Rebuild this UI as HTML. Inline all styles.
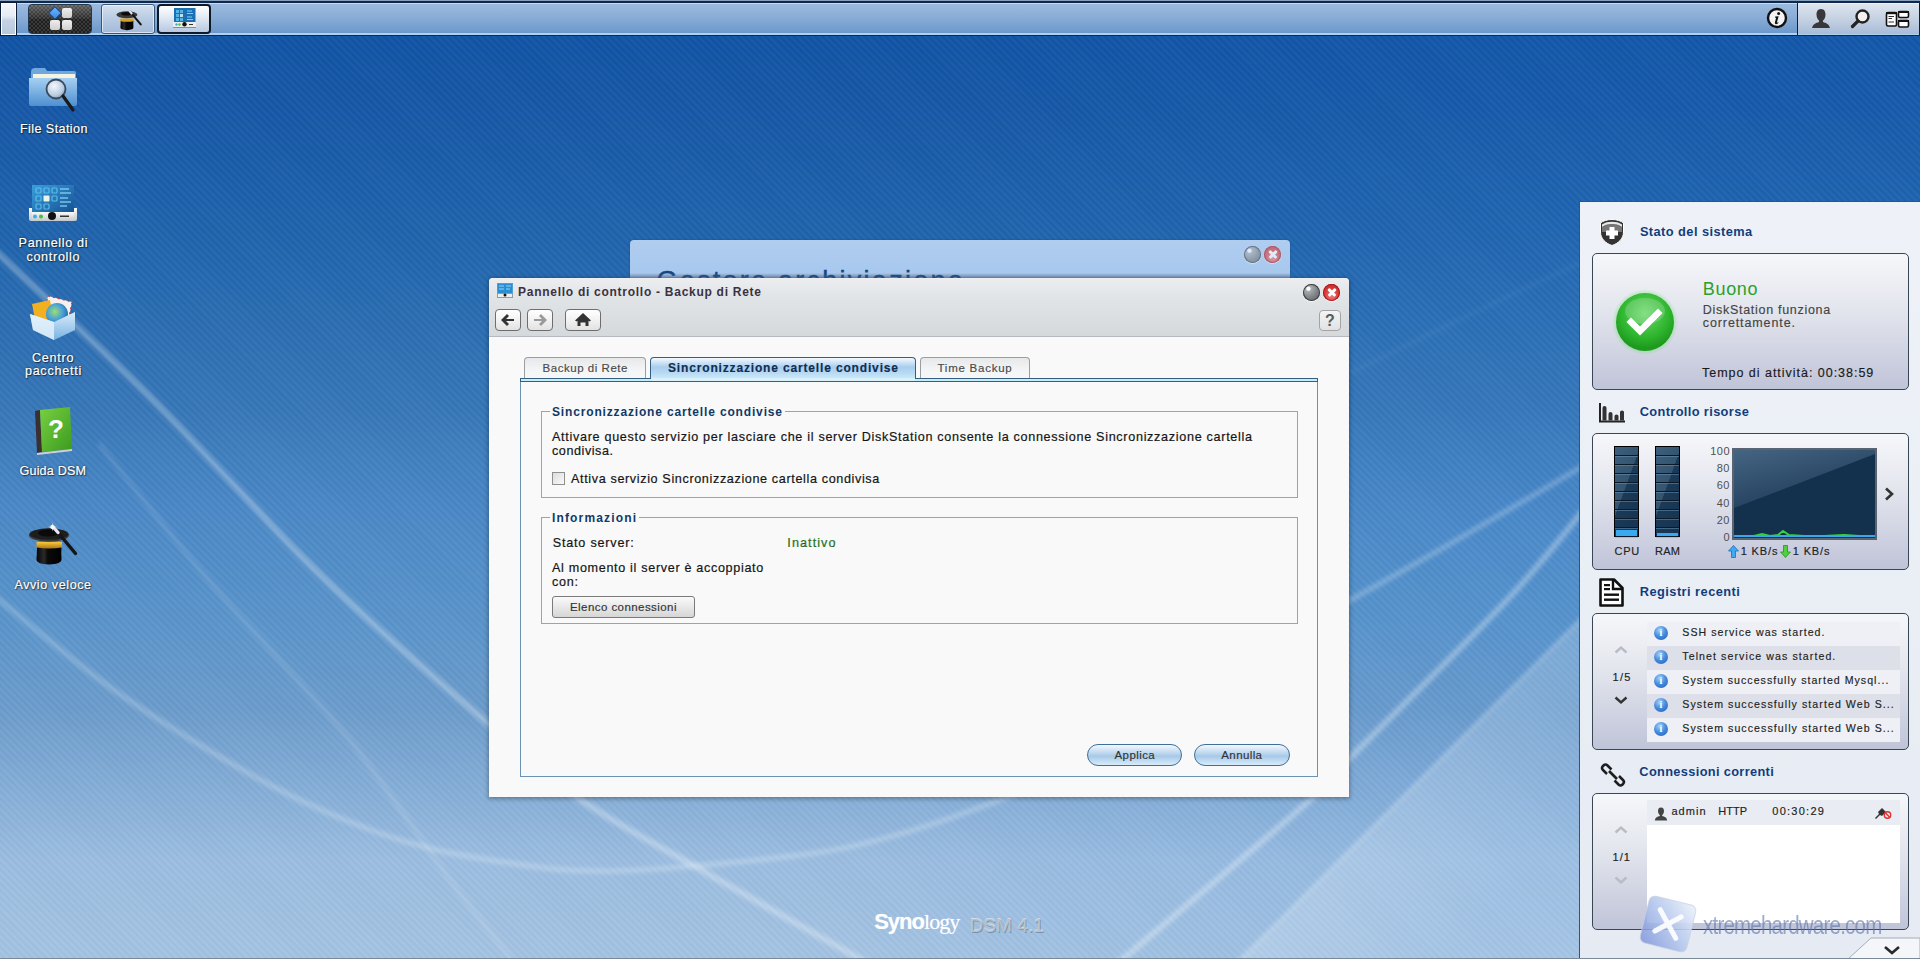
<!DOCTYPE html>
<html><head><meta charset="utf-8">
<style>
*{box-sizing:border-box;margin:0;padding:0}
html,body{width:1920px;height:959px;overflow:hidden}
body{position:relative;font-family:"Liberation Sans",sans-serif;font-size:13px;color:#222;
background:linear-gradient(180deg,#0f52a4 0px,#1658a7 110px,#2165ad 245px,#3777b8 410px,#4a88c6 510px,#5b95cb 625px,#6c9ccc 710px,#9bbde0 860px,#a4c3e2 959px);}
.a{position:absolute}
#stripes{position:absolute;left:0;top:0;width:1920px;height:959px;
background:repeating-linear-gradient(45deg,rgba(255,255,255,0.03) 0 2.5px,rgba(0,0,0,0.02) 2.5px 5px),linear-gradient(90deg,rgba(30,110,220,0) 0,rgba(30,110,220,0) 900px,rgba(40,130,230,.07) 1500px,rgba(40,130,230,.07) 1920px)}
/* top bar */
#bar{position:absolute;left:0;top:0;width:1920px;height:36px;
background:linear-gradient(180deg,#8aa0bc 0,#8aa0bc 1px,#0c2a50 1px,#0c2a50 3px,#c4dcf8 3px,#c4dcf8 4px,#9cbade 4px,#88acd6 18px,#6c98cc 33px,#b0d0f0 33px,#b0d0f0 35px,#0b2a5a 35px,#0b2a5a 36px)}
.dl{position:absolute;white-space:nowrap;color:#fff;font-size:12.6px;-webkit-text-stroke:.2px #fff;line-height:14px;text-shadow:0 0 2px rgba(0,0,0,.7),1px 1px 1px rgba(0,0,0,.5)}
.btng{width:17px;height:17px;border-radius:50%;background:radial-gradient(circle at 32% 28%,#ffffff 0,#ffffff 9%,#a8acb0 16%,#7c8084 55%,#5a5e62 100%);box-shadow:inset 0 0 0 1px #3c4044,0 1px 1px rgba(255,255,255,.8)}
.btnr{width:17px;height:17px;border-radius:50%;background:radial-gradient(circle at 50% 70%,#f07a7a 0,#d83a3a 50%,#c42626 100%);box-shadow:inset 0 0 0 1px #a81c1c,0 1px 1px rgba(255,255,255,.8)}
.btnr span{display:none}
.btnr:before,.btnr:after{content:"";position:absolute;left:3.5px;top:7.2px;width:10px;height:2.6px;background:#fff;border-radius:1px;transform:rotate(45deg)}
.btnr:after{transform:rotate(-45deg)}
.fade{opacity:.62}
.nbtn{border:1px solid #6e6e6e;border-radius:4px;background:linear-gradient(180deg,#ffffff 0,#f2f2f2 50%,#e2e2e2 100%);overflow:hidden}
.nbtn svg{position:absolute;left:0;top:0}
.tab{border:1px solid #9a9ea2;border-bottom:none;border-radius:4px 4px 0 0;background:linear-gradient(180deg,#e6e8ea 0,#f4f5f6 60%,#f6f7f8 100%)}
.tab.act{border-color:#335f80;background:linear-gradient(180deg,#f4faff 0,#a8cdee 40%,#bcdcf4 70%,#d8f2fc 100%)}
.tt{position:absolute;top:3px;font-size:11.5px;line-height:14px;color:#4a4a4a;white-space:nowrap;-webkit-text-stroke:.15px currentColor}
.fs{border:1px solid #86aac6}
.lg{font-weight:bold;font-size:12px;color:#0f3a68;background:#f9f9f9;white-space:nowrap;line-height:14px;padding:0 2px}
.tx{font-size:12.6px;color:#151515;line-height:14px;white-space:nowrap;-webkit-text-stroke:.2px #151515}
.bt{font-size:11.5px;color:#333;line-height:14px;white-space:nowrap;-webkit-text-stroke:.15px currentColor}
.gbtn{border:1px solid #7a7a7a;border-radius:3px;background:linear-gradient(180deg,#fafafa 0,#e8e8e8 50%,#d6d6d6 100%);}
.pbtn{border:1px solid #3f6f9a;border-radius:11px;background:linear-gradient(180deg,#f2f8fc 0,#b8d4ee 45%,#a8c8e8 55%,#d8ecfa 100%);}
.wh{font-weight:bold;font-size:12.8px;line-height:16px;color:#113d7c;white-space:nowrap}
.wt{font-size:12.5px;line-height:14px;color:#1a1a1a;white-space:nowrap;-webkit-text-stroke:.15px currentColor}
.wbox{border:1px solid #3a4654;border-radius:5px;background:linear-gradient(180deg,#f6f7fa 0,#e4e6ee 40%,#c0c4d8 100%)}
.ylab{left:120px;width:30px;text-align:right;font-size:11px;line-height:12px;color:#505050;letter-spacing:.5px}
.row{left:67px;width:253px;height:24px}
.ii{left:74px;width:14px;height:14px;border-radius:50%;background:radial-gradient(circle at 40% 30%,#a8d0f8 0,#4a8ee0 45%,#1a5ab8 100%);color:#fff;font:bold 10px/14px 'Liberation Serif',serif;text-align:center}
.bar{background:#0a141e;border:1px solid #000}
</style></head><body>
<div id="stripes"></div>
<!-- swooshes -->
<svg class="a" style="left:0;top:0" width="1920" height="959" viewBox="0 0 1920 959">
 <defs><filter id="bl1" x="-5%" y="-5%" width="110%" height="110%"><feGaussianBlur stdDeviation="2.2"/></filter>
 <filter id="bl2" x="-5%" y="-5%" width="110%" height="110%"><feGaussianBlur stdDeviation="6"/></filter></defs>
 <g fill="none" stroke="#ffffff" stroke-linecap="round" filter="url(#bl1)">
  <path d="M-10.0 246.0 C4.2 259.2 47.3 298.8 75.0 325.0 C102.7 351.2 129.5 376.3 156.0 403.0 C182.5 429.7 210.0 459.7 234.0 485.0 C258.0 510.3 275.7 530.8 300.0 555.0 C324.3 579.2 348.3 601.7 380.0 630.0 C411.7 658.3 456.5 696.7 490.0 725.0 C523.5 753.3 545.5 775.7 581.0 800.0 C616.5 824.3 659.2 846.0 703.0 871.0 C746.8 896.0 816.2 934.3 844.0 950.0 C871.8 965.7 865.7 962.5 870.0 965.0" stroke-width="6" stroke-opacity=".33"/>
  <path d="M-10.0 592.0 C8.3 606.7 65.0 654.5 100.0 680.0 C135.0 705.5 166.7 725.0 200.0 745.0 C233.3 765.0 266.7 784.2 300.0 800.0 C333.3 815.8 368.3 830.0 400.0 840.0 C431.7 850.0 455.2 854.8 490.0 860.0 C524.8 865.2 557.3 871.8 609.0 871.0 C660.7 870.2 751.5 861.2 800.0 855.0 C848.5 848.8 867.2 843.0 900.0 834.0 C932.8 825.0 963.7 813.3 997.0 801.0 C1030.3 788.7 1082.8 766.8 1100.0 760.0" stroke-width="5" stroke-opacity=".25"/>
  <path d="M100.0 445.0 C116.7 465.8 170.8 535.0 200.0 570.0 C229.2 605.0 250.0 626.7 275.0 655.0 C300.0 683.3 326.7 710.8 350.0 740.0 C373.3 769.2 398.3 806.7 415.0 830.0 C431.7 853.3 433.2 857.5 450.0 880.0 C466.8 902.5 505.0 950.8 516.0 965.0" stroke-width="4" stroke-opacity=".15"/>
  <path d="M1590.0 258.0 C1570.5 267.2 1513.0 293.8 1473.0 313.0 C1433.0 332.2 1370.5 363.0 1350.0 373.0" stroke-width="3" stroke-opacity=".06"/>
  <path d="M1590.0 462.0 C1566.3 475.8 1489.7 521.0 1448.0 545.0 C1406.3 569.0 1358.0 595.8 1340.0 606.0" stroke-width="5" stroke-opacity=".25"/>
  <path d="M1590.0 502.0 C1576.2 518.3 1546.7 557.7 1507.0 600.0 C1467.3 642.3 1384.8 722.7 1352.0 756.0 C1319.2 789.3 1350.3 764.3 1310.0 800.0 C1269.7 835.7 1143.3 941.7 1110.0 970.0" stroke-width="6" stroke-opacity=".33"/>
 </g>
 <defs><linearGradient id="bandg" gradientUnits="userSpaceOnUse" x1="1445" y1="755" x2="1545" y2="855"><stop offset="0" stop-color="#fff" stop-opacity=".2"/><stop offset="1" stop-color="#fff" stop-opacity=".1"/></linearGradient></defs>
 <path d="M1600 600 L1290 910 L1230 970 L1920 970 L1920 600 Z" fill="url(#bandg)" filter="url(#bl1)"/>
 <path d="M1600 600 L1230 970" stroke="#ffffff" stroke-opacity=".2" stroke-width="4" filter="url(#bl1)"/>
</svg>
<div id="bar">
 <div class="a" style="left:0;top:2px;width:17px;height:34px;background:#0a1d3a"></div>
 <div class="a" style="left:1px;top:3px;width:15px;height:32px;background:linear-gradient(180deg,#f4f6fa 0,#e6ecf4 40%,#c6d2e2 55%,#b8c8dc 100%);border:1px solid #fff"></div>
 <!-- start button -->
 <div class="a" style="left:28px;top:4px;width:64px;height:30px;border-radius:4px;border:1px solid #23374f;background:repeating-conic-gradient(#3a3a3a 0 25%,#1e1e1e 0 50%) 0 0/4px 4px;overflow:hidden">
  <div class="a" style="left:0;top:0;width:62px;height:14px;background:linear-gradient(180deg,rgba(255,255,255,.28),rgba(255,255,255,.05))"></div>
  
  <div class="a" style="left:33px;top:3px;width:10px;height:10px;background:linear-gradient(#eee,#cfcfcf);border-radius:2px"></div>
  <div class="a" style="left:21px;top:15px;width:10px;height:10px;background:linear-gradient(#eee,#cfcfcf);border-radius:2px"></div>
  <div class="a" style="left:33px;top:15px;width:10px;height:10px;background:linear-gradient(#eee,#cfcfcf);border-radius:2px"></div>
  <div class="a" style="left:21px;top:3px;width:10px;height:10px;transform:rotate(45deg);background:linear-gradient(135deg,#6ab4ff,#3a8ae8);border:1px solid #1f4f88;border-radius:1.5px"></div>
 </div>
 <!-- hat button -->
 <div class="a" style="left:101px;top:4px;width:54px;height:30px;border-radius:3px;border:1px solid #3b5578;background:linear-gradient(180deg,#d4e0ee 0,#b8cbe2 50%,#a3bad8 100%);box-shadow:inset 0 0 0 1px rgba(255,255,255,.6)">
  <svg class="a" style="left:13px;top:3px" width="28" height="24" viewBox="0 0 52 46">
   <defs><linearGradient id="hb2" x1="0" y1="0" x2="1" y2="0"><stop offset="0" stop-color="#050505"/><stop offset=".3" stop-color="#2a2a2a"/><stop offset=".45" stop-color="#0a0a0a"/><stop offset="1" stop-color="#000"/></linearGradient></defs>
   <path d="M10 24 Q10 32 9.5 37 Q9 42 22 42.5 Q35 42 34.5 37 Q34 32 34.5 24 Z" fill="url(#hb2)"/>
   <path d="M9.5 20 L35 20 L35 25.5 Q22 27.5 9.5 25.5 Z" fill="#d8a020"/>
   <ellipse cx="22" cy="13" rx="20.2" ry="6.8" fill="#3a3a3a"/>
   <ellipse cx="21" cy="11" rx="10" ry="3.5" fill="#0a0a0a"/>
   <line x1="28" y1="7" x2="48.5" y2="31.5" stroke="#151515" stroke-width="4" stroke-linecap="round"/>
   <line x1="27.5" y1="6.5" x2="31" y2="10.5" stroke="#e8e4f4" stroke-width="4" stroke-linecap="round"/>
  </svg>
 </div>
 <!-- control panel button (active) -->
 <div class="a" style="left:157px;top:4px;width:54px;height:30px;border-radius:4px;border:2px solid #0e1a2a;background:linear-gradient(180deg,#ffffff 0,#e8eef6 35%,#b7c9e2 100%)">
  <svg class="a" style="left:13px;top:1px" width="25" height="22" viewBox="0 0 25 22">
   <rect x="2" y="1" width="21.5" height="14.5" fill="#1d6fb4"/>
   <g fill="#5cc0ee" opacity=".85"><rect x="4" y="3" width="3" height="3"/><rect x="8" y="3" width="3" height="3"/><rect x="4" y="7" width="3" height="3"/><rect x="8" y="7" width="3" height="3" fill="#e0f4ff"/><rect x="4" y="11" width="3" height="3"/><rect x="8" y="11" width="3" height="3"/></g>
   <g stroke="#7ad0f4" stroke-width="1"><line x1="15" y1="4" x2="20" y2="4"/><line x1="15" y1="6.5" x2="21" y2="6.5"/><line x1="15" y1="10" x2="20" y2="10"/><line x1="15" y1="12.5" x2="21" y2="12.5"/></g>
   <rect x="1" y="15" width="23" height="5" fill="#eceeee"/>
   <rect x="1" y="20" width="23" height="1" fill="#8a8a8a"/>
   <circle cx="4.5" cy="17.5" r="1.2" fill="#40a8e0"/><circle cx="7.5" cy="17.5" r="1.2" fill="#50c040"/>
   <circle cx="12.5" cy="17.3" r="2.2" fill="#111"/>
   <rect x="17" y="17" width="4" height="1" fill="#333"/>
  </svg>
 </div>
 <!-- right side -->
 <svg class="a" style="left:1766px;top:7px" width="22" height="22" viewBox="0 0 22 22">
  <circle cx="11" cy="11" r="9" fill="#f4f4f4" stroke="#111" stroke-width="2.4"/>
  <circle cx="12.6" cy="6.6" r="1.5" fill="#111"/>
  <path d="M9.2 9.6 L12.6 9.2 L11 15.2 Q10.8 16 11.6 15.6 L12.4 15.1 L12.2 16.2 Q10.6 17.3 9.6 17.1 Q8.6 16.8 8.9 15.6 L10.1 10.8 L9 10.8 Z" fill="#111"/>
 </svg>
 <div class="a" style="left:1797px;top:3px;width:1px;height:32px;background:#0a2040"></div>
 <div class="a" style="left:1798px;top:3px;width:121px;height:31px;background:linear-gradient(180deg,#ffffff 0,#dde4ee 1px,#c6d2e2 50%,#a7bcd8 100%)"></div>
 <div class="a" style="left:1919px;top:3px;width:1px;height:32px;background:#0a2040"></div>
 <svg class="a" style="left:1810px;top:8px" width="22" height="21" viewBox="0 0 22 21">
  <path d="M11 1 C7.5 1 6.5 4 6.5 6.5 C6.5 9.5 8 12 9 12.5 L9 14 C6 15 3 16 2 20 L20 20 C19 16 16 15 13 14 L13 12.5 C14 12 15.5 9.5 15.5 6.5 C15.5 4 14.5 1 11 1 Z" fill="#383838"/>
 </svg>
 <svg class="a" style="left:1849px;top:7px" width="24" height="22" viewBox="0 0 24 22">
  <circle cx="13.5" cy="9.5" r="6" fill="#f2f2f2" stroke="#222" stroke-width="2.4"/>
  <line x1="9" y1="14" x2="3.5" y2="19.5" stroke="#222" stroke-width="3.2" stroke-linecap="round"/>
 </svg>
 <svg class="a" style="left:1884px;top:9px" width="27" height="21" viewBox="0 0 27 21">
  <rect x="2.5" y="3.5" width="10" height="13.5" rx="1.5" fill="#fff" stroke="#111" stroke-width="1.6"/>
  <rect x="2" y="3" width="11" height="2.2" fill="#111"/>
  <line x1="4.5" y1="7.5" x2="10" y2="7.5" stroke="#333" stroke-width="1"/>
  <line x1="4.5" y1="9.5" x2="8" y2="9.5" stroke="#333" stroke-width="1"/>
  <line x1="4.5" y1="13" x2="10" y2="13" stroke="#333" stroke-width="1"/>
  <rect x="14.5" y="2.5" width="10" height="6" rx="1.5" fill="#fff" stroke="#111" stroke-width="1.6"/>
  <rect x="14" y="2" width="11" height="2" fill="#111"/>
  <rect x="14.5" y="11.5" width="10" height="6.5" rx="1.5" fill="#fff" stroke="#111" stroke-width="1.6"/>
  <rect x="14" y="11" width="11" height="2" fill="#111"/>
 </svg>
</div>

<!-- desktop icons -->
<svg class="a" style="left:26px;top:64px" width="54" height="50" viewBox="0 0 54 50">
 <defs><linearGradient id="fg" x1="0" y1="0" x2="0" y2="1"><stop offset="0" stop-color="#a6d0f2"/><stop offset="1" stop-color="#4f8fd0"/></linearGradient>
 <radialGradient id="lens" cx=".4" cy=".35" r=".7"><stop offset="0" stop-color="#f4f8fc"/><stop offset=".7" stop-color="#b8cce0"/><stop offset="1" stop-color="#7a9ab8"/></radialGradient></defs>
 <path d="M9 4 L19 4 L21 7 L48 7 Q50 7 50 9 L50 16 L5 16 L5 8 Q5 4 9 4 Z" fill="#6ea8de"/>
 <rect x="7" y="10" width="42" height="6" fill="#f6f4e0"/>
 <path d="M3 14 L51 14 L51 40 Q51 42 49 42 L5 42 Q3 42 3 40 Z" fill="url(#fg)"/>
 <circle cx="30" cy="25" r="9.5" fill="url(#lens)" stroke="#3a4a5a" stroke-width="1.8"/>
 <line x1="37" y1="32" x2="47" y2="46" stroke="#1a1a1a" stroke-width="3.2" stroke-linecap="round"/>
</svg>
<svg class="a" style="left:27px;top:183px" width="52" height="40" viewBox="0 0 52 40">
 <defs><linearGradient id="cpg" x1="0" y1="0" x2="1" y2="1"><stop offset="0" stop-color="#3a9ede"/><stop offset="1" stop-color="#14508e"/></linearGradient>
 <linearGradient id="cpb" x1="0" y1="0" x2="0" y2="1"><stop offset="0" stop-color="#fafafa"/><stop offset="1" stop-color="#c4c8cc"/></linearGradient></defs>
 <rect x="5" y="2" width="42" height="29" fill="url(#cpg)"/>
 <g fill="none" stroke="#5fc2ee" stroke-width="1.2" opacity=".9">
  <rect x="9" y="5" width="5" height="5" rx="1"/><rect x="17" y="5" width="5" height="5" rx="1"/><rect x="25" y="5" width="5" height="5" rx="1"/>
  <rect x="9" y="13" width="5" height="5" rx="1"/><rect x="25" y="13" width="5" height="5" rx="1"/>
  <rect x="9" y="21" width="5" height="5" rx="1"/><rect x="17" y="21" width="5" height="5" rx="1"/></g>
 <rect x="16.5" y="12.5" width="6" height="6" rx="1" fill="#e8f4e8"/>
 <g stroke="#8ad0f4" stroke-width="1.3"><line x1="33" y1="6" x2="42" y2="6"/><line x1="33" y1="10" x2="44" y2="10"/><line x1="33" y1="15" x2="41" y2="15"/><line x1="33" y1="19" x2="44" y2="19"/><line x1="33" y1="23" x2="40" y2="23"/></g>
 <path d="M2 25 L2 36 Q2 38 4 38 L48 38 Q50 38 50 36 L50 25 L47 25 L47 29 L5 29 L5 25 Z" fill="url(#cpb)"/>
 <rect x="5" y="29" width="42" height="9" fill="url(#cpb)"/>
 <circle cx="8" cy="33.5" r="2" fill="#3ab0e8"/><circle cx="14" cy="33.5" r="2" fill="#42c040"/>
 <circle cx="25" cy="33" r="4" fill="#111"/>
 <rect x="33" y="32.5" width="9" height="1.5" fill="#333"/>
</svg>
<svg class="a" style="left:28px;top:292px" width="50" height="50" viewBox="0 0 50 50">
 <defs><linearGradient id="boxg" x1="0" y1="0" x2="0" y2="1"><stop offset="0" stop-color="#d8ecfa"/><stop offset="1" stop-color="#7ab2e2"/></linearGradient>
 <radialGradient id="globe" cx=".4" cy=".4" r=".6"><stop offset="0" stop-color="#9ae070"/><stop offset=".6" stop-color="#4aa0d8"/><stop offset="1" stop-color="#2a70b0"/></radialGradient></defs>
 <path d="M20 4 L44 10 L40 30 L16 24 Z" fill="#f4f0f0" stroke="#c03030" stroke-width="1" stroke-dasharray="2 3"/>
 <path d="M4 12 L22 8 L26 28 L8 32 Z" fill="#f0b020"/>
 <circle cx="29" cy="22" r="11" fill="url(#globe)"/>
 <path d="M2 22 L26 30 L47 20 L47 38 L26 48 L5 38 Z" fill="url(#boxg)"/>
 <path d="M2 22 L26 30 L26 48 L5 38 Z" fill="#e6f2fc" opacity=".8"/>
</svg>
<svg class="a" style="left:31px;top:406px" width="44" height="50" viewBox="0 0 44 50">
 <defs><linearGradient id="bk" x1="0" y1="0" x2="1" y2="1"><stop offset="0" stop-color="#7ad040"/><stop offset="1" stop-color="#3a9a20"/></linearGradient></defs>
 <path d="M4 5 L9 4 L11 46 L6 47 Z" fill="#3a3030"/>
 <path d="M9 4 L39 1 L41 43 L11 46 Z" fill="url(#bk)"/>
 <path d="M6 47 L41 43 L41 45 L6 49 Z" fill="#d0d0d0"/>
 <text x="25" y="32" font-family="Liberation Sans" font-weight="bold" font-size="26" fill="#fff" text-anchor="middle">?</text>
</svg>
<svg class="a" style="left:27px;top:522px" width="52" height="46" viewBox="0 0 52 46">
 <defs><linearGradient id="hb" x1="0" y1="0" x2="1" y2="0"><stop offset="0" stop-color="#050505"/><stop offset=".3" stop-color="#2a2a2a"/><stop offset=".45" stop-color="#0a0a0a"/><stop offset="1" stop-color="#000"/></linearGradient>
 <linearGradient id="hg" x1="0" y1="0" x2="0" y2="1"><stop offset="0" stop-color="#f8c840"/><stop offset="1" stop-color="#b07810"/></linearGradient></defs>
 <path d="M10 24 Q10 32 9.5 37 Q9 42 22 42.5 Q35 42 34.5 37 Q34 32 34.5 24 Z" fill="url(#hb)"/>
 <path d="M9.5 20 L35 20 L35 25.5 Q22 27.5 9.5 25.5 Z" fill="url(#hg)"/>
 <ellipse cx="22" cy="13" rx="20.2" ry="6.8" fill="#3a3a3a"/>
 <ellipse cx="22" cy="12.2" rx="19" ry="5.6" fill="#1e1e1e"/>
 <ellipse cx="21" cy="11" rx="10" ry="3.5" fill="#0a0a0a"/>
 <line x1="28" y1="7" x2="48.5" y2="31.5" stroke="#151515" stroke-width="3.4" stroke-linecap="round"/>
 <line x1="27.5" y1="6.5" x2="31" y2="10.5" stroke="#e8e4f4" stroke-width="3.4" stroke-linecap="round"/>
 <circle cx="25.5" cy="5" r="2.2" fill="#fff" opacity=".85"/>
 <path d="M25.5 0.5 L26.2 4.3 L30 5 L26.2 5.7 L25.5 9.5 L24.8 5.7 L21 5 L24.8 4.3 Z" fill="#fff" opacity=".8"/>
</svg>
<!-- desktop labels -->
<div class="dl" id="t_fs" style="left:20.0px;top:122.0px;letter-spacing:0.408px">File Station</div>
<div class="dl" id="t_pc1" style="left:18.6px;top:236.2px;letter-spacing:0.658px">Pannello di</div>
<div class="dl" id="t_pc2" style="left:26.4px;top:249.8px;letter-spacing:0.698px">controllo</div>
<div class="dl" id="t_cp1" style="left:31.9px;top:350.6px;letter-spacing:0.740px">Centro</div>
<div class="dl" id="t_cp2" style="left:24.9px;top:364.2px;letter-spacing:0.736px">pacchetti</div>
<div class="dl" id="t_gd" style="left:19.5px;top:464.0px;letter-spacing:0.175px">Guida DSM</div>
<div class="dl" id="t_av" style="left:14.4px;top:578.4px;letter-spacing:0.565px">Avvio veloce</div>

<!-- background window -->
<div class="a" style="left:630px;top:240px;width:660px;height:50px;background:linear-gradient(180deg,#b0cdf0,#a4c5ec);border-radius:4px 4px 0 0;overflow:hidden;box-shadow:0 0 2px rgba(0,0,0,.3)">
 <div class="a" id="t_gest" style="left:26.5px;top:26.0px;font-size:27px;line-height:30px;color:#114683;-webkit-text-stroke:.4px #114683;letter-spacing:2.253px;white-space:nowrap">Gestore archiviazione</div>
 <div class="a btng fade" style="left:614px;top:6px"></div>
 <div class="a btnr fade" style="left:634px;top:6px"><span>&#215;</span></div>
</div>

<div class="a" style="left:630px;top:273px;width:660px;height:5px;background:linear-gradient(180deg,rgba(120,150,190,0),rgba(80,105,140,.6))"></div>
<!-- main dialog -->
<div class="a" id="dlg" style="left:489px;top:278px;width:860px;height:519px;background:#f9f9f9;border-radius:4px 4px 0 0;box-shadow:0 1px 4px 1px rgba(0,0,0,.3)">
 <div class="a" style="left:0;top:0;width:860px;height:59px;border-radius:4px 4px 0 0;background:linear-gradient(180deg,#eceef0 0,#e2e5e8 30%,#d6d9dc 100%);border-bottom:1px solid #b6babe"></div>
 <svg class="a" style="left:8px;top:5px" width="16" height="15" viewBox="0 0 16 15">
  <rect x="0.5" y="0.5" width="15" height="10" fill="#2a8ed0" stroke="#4aa0d8" stroke-width="1"/>
  <g stroke="#8ad8f8" stroke-width="1"><line x1="2" y1="3" x2="7" y2="3"/><line x1="2" y1="6" x2="7" y2="6"/><line x1="9" y1="3" x2="14" y2="3"/><line x1="9" y1="6" x2="13" y2="6"/></g>
  <rect x="0.5" y="10.5" width="15" height="4" fill="#eee" stroke="#999" stroke-width="1"/>
  <circle cx="8" cy="12" r="1.5" fill="#111"/>
 </svg>
 <div class="a" id="t_title" style="left:29.0px;top:7.0px;font-weight:bold;font-size:12px;line-height:14px;color:#3a3242;white-space:nowrap;letter-spacing:0.729px">Pannello di controllo - Backup di Rete</div>
 <div class="a btng" style="left:814px;top:6px"></div>
 <div class="a btnr" style="left:834px;top:6px"><span>&#215;</span></div>
 <!-- nav buttons -->
 <div class="a nbtn" style="left:6px;top:31px;width:26px;height:22px"><svg width="24" height="20" viewBox="0 0 24 20"><path d="M5 10 L11 4 L13 6 L10 9 L18 9 L18 11 L10 11 L13 14 L11 16 Z" fill="#333"/></svg></div>
 <div class="a nbtn" style="left:38px;top:31px;width:26px;height:22px"><svg width="24" height="20" viewBox="0 0 24 20"><path d="M19 10 L13 4 L11 6 L14 9 L6 9 L6 11 L14 11 L11 14 L13 16 Z" fill="#9a9a9a"/></svg></div>
 <div class="a nbtn" style="left:76px;top:31px;width:36px;height:22px"><svg width="34" height="20" viewBox="0 0 34 20"><path d="M17 3 L25 10.5 L23.5 11.5 L22.5 10.8 L22.5 16 L19.5 16 L19.5 12.5 L14.5 12.5 L14.5 16 L11.5 16 L11.5 10.8 L10.5 11.5 L9 10.5 Z" fill="#333"/></svg></div>
 <div class="a nbtn" style="left:830px;top:32px;width:22px;height:21px;text-align:center;font:bold 16px/20px 'Liberation Sans',sans-serif;color:#5a5a5a;border-color:#a4a4a4;background:linear-gradient(180deg,#f4f4f4,#e0e2e4)">?</div>

 <!-- tabs -->
 <div class="a tab" style="left:35px;top:79px;width:122px;height:22px"><span class="tt" id="t_tab1" style="left:17.5px;top:3.0px;letter-spacing:0.539px">Backup di Rete</span></div>
 <div class="a tab act" style="left:161px;top:79px;width:266px;height:24px"><span class="tt" id="t_tab2" style="left:17.0px;font-weight:bold;color:#0f2e52;top:3.0px;letter-spacing:0.841px;font-size:12px">Sincronizzazione cartelle condivise</span></div>
 <div class="a tab" style="left:431px;top:79px;width:110px;height:22px"><span class="tt" id="t_tab3" style="left:16.5px;top:3.0px;letter-spacing:0.751px">Time Backup</span></div>
 <div class="a" style="left:31px;top:100px;width:798px;height:4px;background:#c6ecfb;border:1px solid #335f80"></div>
 <div class="a act-cover" style="left:162px;top:100px;width:264px;height:3px;background:#d8f2fc"></div>
 <!-- panel -->
 <div class="a" style="left:31px;top:104px;width:798px;height:395px;border:1px solid #6a92b4;border-top:none;background:#f9f9f9"></div>

 <!-- fieldset 1 -->
 <div class="a fs" style="left:52px;top:133px;width:757px;height:87px"></div>
 <div class="a lg" id="t_lg1" style="left:61.0px;top:127.0px;letter-spacing:0.841px">Sincronizzazione cartelle condivise</div>
 <div class="a tx" id="t_d1" style="left:63.0px;top:152.0px;letter-spacing:0.694px">Attivare questo servizio per lasciare che il server DiskStation consente la connessione Sincronizzazione cartella</div>
 <div class="a tx" id="t_d2" style="left:63.0px;top:166.0px;letter-spacing:0.555px">condivisa.</div>
 <div class="a" style="left:63px;top:194px;width:13px;height:13px;border:1px solid #8e8f8f;background:linear-gradient(135deg,#dcdcdc,#fafafa)"></div>
 <div class="a tx" id="t_cb" style="left:82.0px;top:194.0px;letter-spacing:0.636px">Attiva servizio Sincronizzazione cartella condivisa</div>

 <!-- fieldset 2 -->
 <div class="a fs" style="left:52px;top:239px;width:757px;height:107px"></div>
 <div class="a lg" id="t_lg2" style="left:61.0px;top:233.0px;letter-spacing:1.151px">Informazioni</div>
 <div class="a tx" id="t_ss" style="left:63.7px;top:257.7px;letter-spacing:0.800px">Stato server:</div>
 <div class="a tx" id="t_in" style="left:298.3px;top:257.7px;color:#1f8f1f;letter-spacing:1.084px">Inattivo</div>
 <div class="a tx" id="t_am" style="left:63.0px;top:282.7px;letter-spacing:0.675px">Al momento il server è accoppiato</div>
 <div class="a tx" id="t_con" style="left:63.0px;top:297.0px;letter-spacing:0.730px">con:</div>
 <div class="a gbtn" style="left:63px;top:318px;width:143px;height:22px"></div><div class="a bt" id="t_el" style="left:81.0px;top:322.0px;letter-spacing:0.435px">Elenco connessioni</div>

 <!-- buttons -->
 <div class="a pbtn" style="left:598px;top:466px;width:95px;height:22px"></div><div class="a bt" id="t_ap" style="left:625.5px;top:469.7px;letter-spacing:0.412px">Applica</div>
 <div class="a pbtn" style="left:705px;top:466px;width:96px;height:22px"></div><div class="a bt" id="t_an" style="left:732.3px;top:469.7px;letter-spacing:0.387px">Annulla</div>
</div>

<!-- widget panel -->
<div class="a" id="wp" style="left:1579px;top:201px;width:341px;height:758px;background:linear-gradient(180deg,#eef2f8 0,#e6ebf3 100%);border-left:1px solid #28558c;border-top:1px solid #28558c"></div>
<div class="a" style="left:1580px;top:202px;width:340px;height:757px;overflow:hidden">
 <!-- 1: stato -->
 <svg class="a" style="left:18px;top:16px" width="28" height="29" viewBox="0 0 28 29">
  <path d="M14 1.5 C9 1.5 5 3 2.5 5 L2.5 14 C2.5 21 8 25.5 14 27.5 C20 25.5 25.5 21 25.5 14 L25.5 5 C23 3 19 1.5 14 1.5 Z" fill="#333" stroke="#fff" stroke-width="1"/>
  <path d="M4 6.5 C7 4.5 10 3.8 14 3.8 C18 3.8 21 4.5 24 6.5 L24 9 C21 7 18 6.3 14 6.3 C10 6.3 7 7 4 9 Z" fill="#e8e8e8"/>
  <path d="M4 9 C7 7 10 6.3 14 6.3 C18 6.3 21 7 24 9 L24 14 L4 14 Z" fill="#777"/>
  <path d="M11.5 9 L16.5 9 L16.5 12.5 L20 12.5 L20 17.5 L16.5 17.5 L16.5 21 L11.5 21 L11.5 17.5 L8 17.5 L8 12.5 L11.5 12.5 Z" fill="#fff"/>
 </svg>
 <div class="a wh" id="t_w1" style="left:59.9px;top:21.6px;letter-spacing:0.440px">Stato del sistema</div>
 <div class="a wbox" style="left:12px;top:51px;width:317px;height:137px"></div>
 <svg class="a" style="left:32px;top:87px" width="66" height="66" viewBox="0 0 66 66">
  <defs><radialGradient id="gc" cx=".5" cy=".35" r=".6"><stop offset="0" stop-color="#6ad86a"/><stop offset=".7" stop-color="#2eb52e"/><stop offset="1" stop-color="#1e9a1e"/></radialGradient>
  <radialGradient id="gl" cx=".5" cy=".5" r=".5"><stop offset=".8" stop-color="#60e060" stop-opacity=".5"/><stop offset="1" stop-color="#60e060" stop-opacity="0"/></radialGradient></defs>
  <circle cx="33" cy="33" r="33" fill="url(#gl)"/>
  <circle cx="33" cy="33" r="29" fill="url(#gc)"/>
  <ellipse cx="33" cy="22" rx="20" ry="13" fill="#fff" opacity=".18"/>
  <path d="M19 33 L28 42 L46 24" fill="none" stroke="#fff" stroke-width="6.5" stroke-linecap="square"/>
 </svg>
 <div class="a" id="t_buono" style="left:122.8px;top:75.5px;font-size:18px;line-height:22px;color:#2aa12a;white-space:nowrap;letter-spacing:0.659px">Buono</div>
 <div class="a wt" id="t_ds1" style="left:122.8px;top:100.7px;color:#444;letter-spacing:0.708px">DiskStation funziona</div>
 <div class="a wt" id="t_ds2" style="left:122.8px;top:114.3px;color:#444;letter-spacing:0.893px">correttamente.</div>
 <div class="a wt" id="t_tempo" style="left:122.0px;top:163.8px;letter-spacing:0.976px">Tempo di attività: 00:38:59</div>

 <!-- 2: risorse -->
 <svg class="a" style="left:18px;top:200px" width="28" height="21" viewBox="0 0 28 21">
  <rect x="1" y="1" width="2" height="19" fill="#222"/>
  <rect x="1" y="18.5" width="26" height="2" fill="#222"/>
  <path d="M4.5 6 Q4.5 4 6.5 4 Q8.5 4 8.5 6 L8.5 18.5 L4.5 18.5 Z" fill="#333"/>
  <path d="M10.5 12 Q10.5 10 12.5 10 Q14.5 10 14.5 12 L14.5 18.5 L10.5 18.5 Z" fill="#333"/>
  <path d="M16.5 14 Q16.5 12.5 18.5 12.5 Q20.5 12.5 20.5 14 L20.5 18.5 L16.5 18.5 Z" fill="#333"/>
  <path d="M22 10 Q22 8.5 24 8.5 Q26 8.5 26 10 L26 18.5 L22 18.5 Z" fill="#333"/>
 </svg>
 <div class="a wh" id="t_w2" style="left:59.7px;top:201.7px;letter-spacing:0.374px">Controllo risorse</div>
 <div class="a wbox" style="left:12px;top:231px;width:317px;height:137px"></div>
 <div class="a bar" style="left:34px;top:244px;width:25px;height:91px">
  <div class="a" style="left:0;top:0;width:23px;height:89px;background:linear-gradient(110deg,#3e5f7c 0,#34546f 45%,#1a3a58 46%,#163452 100%)"></div>
  <div class="a" style="left:0;top:8px;width:23px;height:1px;background:#0b1a28;box-shadow:0 1px 0 rgba(120,160,190,.45)"></div><div class="a" style="left:0;top:17px;width:23px;height:1px;background:#0b1a28;box-shadow:0 1px 0 rgba(120,160,190,.45)"></div><div class="a" style="left:0;top:26px;width:23px;height:1px;background:#0b1a28;box-shadow:0 1px 0 rgba(120,160,190,.45)"></div><div class="a" style="left:0;top:35px;width:23px;height:1px;background:#0b1a28;box-shadow:0 1px 0 rgba(120,160,190,.45)"></div><div class="a" style="left:0;top:44px;width:23px;height:1px;background:#0b1a28;box-shadow:0 1px 0 rgba(120,160,190,.45)"></div><div class="a" style="left:0;top:53px;width:23px;height:1px;background:#0b1a28;box-shadow:0 1px 0 rgba(120,160,190,.45)"></div><div class="a" style="left:0;top:62px;width:23px;height:1px;background:#0b1a28;box-shadow:0 1px 0 rgba(120,160,190,.45)"></div><div class="a" style="left:0;top:71px;width:23px;height:1px;background:#0b1a28;box-shadow:0 1px 0 rgba(120,160,190,.45)"></div><div class="a" style="left:0;top:80px;width:23px;height:1px;background:#0b1a28;box-shadow:0 1px 0 rgba(120,160,190,.45)"></div><div class="a" style="left:0;top:89px;width:23px;height:1px;background:#0b1a28;box-shadow:0 1px 0 rgba(120,160,190,.45)"></div>
  <div class="a" style="left:1px;top:83px;width:21px;height:6px;background:#3aaaf0"></div>
 </div>
 <div class="a bar" style="left:75px;top:244px;width:25px;height:91px">
  <div class="a" style="left:0;top:0;width:23px;height:89px;background:linear-gradient(110deg,#3e5f7c 0,#34546f 45%,#1a3a58 46%,#163452 100%)"></div>
  <div class="a" style="left:0;top:8px;width:23px;height:1px;background:#0b1a28;box-shadow:0 1px 0 rgba(120,160,190,.45)"></div><div class="a" style="left:0;top:17px;width:23px;height:1px;background:#0b1a28;box-shadow:0 1px 0 rgba(120,160,190,.45)"></div><div class="a" style="left:0;top:26px;width:23px;height:1px;background:#0b1a28;box-shadow:0 1px 0 rgba(120,160,190,.45)"></div><div class="a" style="left:0;top:35px;width:23px;height:1px;background:#0b1a28;box-shadow:0 1px 0 rgba(120,160,190,.45)"></div><div class="a" style="left:0;top:44px;width:23px;height:1px;background:#0b1a28;box-shadow:0 1px 0 rgba(120,160,190,.45)"></div><div class="a" style="left:0;top:53px;width:23px;height:1px;background:#0b1a28;box-shadow:0 1px 0 rgba(120,160,190,.45)"></div><div class="a" style="left:0;top:62px;width:23px;height:1px;background:#0b1a28;box-shadow:0 1px 0 rgba(120,160,190,.45)"></div><div class="a" style="left:0;top:71px;width:23px;height:1px;background:#0b1a28;box-shadow:0 1px 0 rgba(120,160,190,.45)"></div><div class="a" style="left:0;top:80px;width:23px;height:1px;background:#0b1a28;box-shadow:0 1px 0 rgba(120,160,190,.45)"></div><div class="a" style="left:0;top:89px;width:23px;height:1px;background:#0b1a28;box-shadow:0 1px 0 rgba(120,160,190,.45)"></div>
  <div class="a" style="left:1px;top:86px;width:21px;height:3px;background:#3aaaf0"></div>
 </div>
 <div class="a wt" id="t_cpu" style="font-size:11px;left:34.6px;top:342.3px;color:#222;letter-spacing:0.737px">CPU</div>
 <div class="a wt" id="t_ram" style="font-size:11px;left:75.0px;top:342.3px;color:#222;letter-spacing:0.275px">RAM</div>
 <div class="a ylab" style="top:243px">100</div>
 <div class="a ylab" style="top:260px">80</div>
 <div class="a ylab" style="top:277px">60</div>
 <div class="a ylab" style="top:295px">40</div>
 <div class="a ylab" style="top:312px">20</div>
 <div class="a ylab" style="top:329px">0</div>
 <div class="a" style="left:152px;top:246px;width:145px;height:92px;background:linear-gradient(160deg,#4a6a88 0,#2e4e6c 35%,#13304e 60%,#112c48 100%);border:2px solid #5a6470;border-bottom-width:2px">
  <svg class="a" style="left:0;top:0" width="141" height="88" viewBox="0 0 141 88">
   <defs><linearGradient id="chg" x1="0" y1="0" x2=".6" y2="1"><stop offset="0" stop-color="#4e6e8c"/><stop offset="1" stop-color="#1e3c5a"/></linearGradient></defs>
   <rect x="0" y="0" width="141" height="88" fill="#13304c"/>
   <polygon points="0,0 141,0 141,4 0,58" fill="url(#chg)" opacity=".85"/>
   <polyline points="0,86 20,86 28,84 36,86 44,85 49,81 55,85 70,86 90,86 110,85 125,86 141,86" fill="none" stroke="#36d040" stroke-width="2"/>
   <polyline points="0,86 141,86" fill="none" stroke="#38a8e8" stroke-width="2"/>
  </svg>
 </div>
 <svg class="a" style="left:304px;top:285px" width="10" height="14" viewBox="0 0 10 14"><path d="M2 1.5 L8 7 L2 12.5" fill="none" stroke="#333" stroke-width="2.6"/></svg>
 <svg class="a" style="left:148px;top:343px" width="11" height="13" viewBox="0 0 11 13"><path d="M5.5 0.5 L10.5 6 L7.5 6 L7.5 12.5 L3.5 12.5 L3.5 6 L0.5 6 Z" fill="#40a8f0" stroke="#1a70b8" stroke-width=".8"/></svg>
 <div class="a wt" id="t_up" style="font-size:11px;left:160.7px;top:341.8px;color:#222;letter-spacing:0.878px">1 KB/s</div>
 <svg class="a" style="left:200px;top:343px" width="11" height="13" viewBox="0 0 11 13"><path d="M5.5 12.5 L10.5 7 L7.5 7 L7.5 0.5 L3.5 0.5 L3.5 7 L0.5 7 Z" fill="#50d040" stroke="#2a9020" stroke-width=".8"/></svg>
 <div class="a wt" id="t_down" style="font-size:11px;left:212.8px;top:341.8px;color:#222;letter-spacing:0.839px">1 KB/s</div>

 <!-- 3: registri -->
 <svg class="a" style="left:19px;top:376px" width="25" height="29" viewBox="0 0 25 29">
  <path d="M1.5 1.5 L15 1.5 L23.5 10 L23.5 27.5 L1.5 27.5 Z" fill="#fff" stroke="#111" stroke-width="2.6" stroke-linejoin="round"/>
  <path d="M14 1.5 L14 11 L23.5 11" fill="none" stroke="#111" stroke-width="2.4"/>
  <rect x="5" y="6" width="6" height="2.2" fill="#111"/><rect x="5" y="10" width="6" height="2.2" fill="#111"/>
  <rect x="5" y="15.5" width="15" height="2.4" fill="#111"/><rect x="5" y="20.5" width="15" height="2.4" fill="#111"/>
 </svg>
 <div class="a wh" id="t_w3" style="left:59.7px;top:381.7px;letter-spacing:0.469px">Registri recenti</div>
 <div class="a wbox" style="left:12px;top:411px;width:317px;height:137px"></div>
 <svg class="a" style="left:34px;top:443px" width="14" height="9" viewBox="0 0 14 9"><path d="M1.5 7.5 L7 2.5 L12.5 7.5" fill="none" stroke="#b8bcc4" stroke-width="2.4"/></svg>
 <div class="a wt" id="t_p15" style="font-size:11px;left:32.6px;top:468.3px;color:#222;letter-spacing:1.247px">1/5</div>
 <svg class="a" style="left:34px;top:494px" width="14" height="9" viewBox="0 0 14 9"><path d="M1.5 1.5 L7 6.5 L12.5 1.5" fill="none" stroke="#333" stroke-width="2.4"/></svg>
 <div class="a" style="left:67px;top:420px;width:253px;height:120px;background:#e4e7ee"></div>
 <div class="a row" style="top:420px;background:#eef0f5"></div>
 <div class="a row" style="top:444px;background:#dde0e8"></div>
 <div class="a row" style="top:468px;background:#eef0f5"></div>
 <div class="a row" style="top:492px;background:#dde0e8"></div>
 <div class="a row" style="top:516px;background:#eef0f5"></div>
 <div class="a ii" style="top:424px">i</div>
 <div class="a ii" style="top:448px">i</div>
 <div class="a ii" style="top:472px">i</div>
 <div class="a ii" style="top:496px">i</div>
 <div class="a ii" style="top:520px">i</div>
 <div class="a wt" id="t_l1" style="font-size:10.6px;left:102.3px;top:422.8px;color:#222;letter-spacing:1.037px">SSH service was started.</div>
 <div class="a wt" id="t_l2" style="font-size:10.6px;left:102.3px;top:446.8px;color:#222;letter-spacing:1.084px">Telnet service was started.</div>
 <div class="a wt" id="t_l3" style="font-size:10.6px;left:102.3px;top:470.8px;color:#222;letter-spacing:1.027px">System successfully started Mysql...</div>
 <div class="a wt" id="t_l4" style="font-size:10.6px;left:102.3px;top:494.8px;color:#222;letter-spacing:1.069px">System successfully started Web S...</div>
 <div class="a wt" id="t_l5" style="font-size:10.6px;left:102.3px;top:518.8px;color:#222;letter-spacing:1.069px">System successfully started Web S...</div>

 <!-- 4: connessioni -->
 <svg class="a" style="left:19px;top:559px" width="28" height="28" viewBox="0 0 28 28">
  <g fill="none" stroke="#1e1e1e" stroke-width="2.5" stroke-linecap="butt">
   <path d="M12.5 8.5 L8.5 4.5 Q6.5 2.5 4.5 4.5 L4 5 Q2 7 4 9 L8 13" transform="translate(0,0)"/>
   <path d="M15.5 19.5 L19.5 23.5 Q21.5 25.5 23.5 23.5 L24 23 Q26 21 24 19 L20 15"/>
   <line x1="10" y1="10" x2="18" y2="18" stroke-width="2.6"/>
  </g>
 </svg>
 <div class="a wh" id="t_w4" style="left:59.3px;top:562.2px;letter-spacing:0.342px">Connessioni correnti</div>
 <div class="a wbox" style="left:12px;top:591px;width:317px;height:137px"></div>
 <svg class="a" style="left:34px;top:623px" width="14" height="9" viewBox="0 0 14 9"><path d="M1.5 7.5 L7 2.5 L12.5 7.5" fill="none" stroke="#b8bcc4" stroke-width="2.4"/></svg>
 <div class="a wt" id="t_p11" style="font-size:11px;left:32.5px;top:648.2px;color:#222;letter-spacing:1.100px">1/1</div>
 <svg class="a" style="left:34px;top:674px" width="14" height="9" viewBox="0 0 14 9"><path d="M1.5 1.5 L7 6.5 L12.5 1.5" fill="none" stroke="#b8bcc4" stroke-width="2.4"/></svg>
 <div class="a" style="left:67px;top:598px;width:253px;height:25px;background:#e9ecf2"></div>
 <div class="a" style="left:67px;top:623px;width:253px;height:98px;background:#fff"></div>
 <svg class="a" style="left:74px;top:605px" width="14" height="14" viewBox="0 0 14 14"><path d="M7 0.5 C4.8 0.5 4 2.2 4 4 C4 6 5 7.5 5.8 8 L5.8 9 C3.5 9.6 1.2 10.5 0.8 13.5 L13.2 13.5 C12.8 10.5 10.5 9.6 8.2 9 L8.2 8 C9 7.5 10 6 10 4 C10 2.2 9.2 0.5 7 0.5 Z" fill="#444"/></svg>
 <div class="a wt" id="t_adm" style="font-size:11px;left:91.4px;top:602.4px;color:#222;letter-spacing:1.059px">admin</div>
 <div class="a wt" id="t_http" style="font-size:11px;left:138.2px;top:602.4px;color:#222;letter-spacing:0.026px">HTTP</div>
 <div class="a wt" id="t_time" style="font-size:11px;left:192.3px;top:602.4px;color:#222;letter-spacing:1.253px">00:30:29</div>
 <svg class="a" style="left:294px;top:605px" width="18" height="12" viewBox="0 0 18 12"><path d="M1 11 L5 7 L4 5 L8 1 L12 5 L8 9 L6 8 L2 12 Z" fill="#333"/><circle cx="13.5" cy="8" r="3.2" fill="none" stroke="#e03030" stroke-width="1.4"/><line x1="11.3" y1="5.8" x2="15.7" y2="10.2" stroke="#e03030" stroke-width="1.4"/></svg>

 <!-- bottom tab -->
 <svg class="a" style="left:0;top:730px" width="340" height="27" viewBox="0 0 340 27">
  <path d="M268 27 L291 6 L340 6 L340 27 Z" fill="#f4f6fa" stroke="#a8acb4" stroke-width="1"/>
  <path d="M305 15 L312 21 L319 15" fill="none" stroke="#2a2a2a" stroke-width="2.6"/>
 </svg>
</div>
<!-- synology logo -->
<div class="a" id="t_syn" style="left:874.2px;top:910.2px;font-size:22px;line-height:24px;color:#fff;white-space:nowrap;text-shadow:0 0 1px rgba(255,255,255,.5);letter-spacing:-0.971px"><b style="letter-spacing:-1px">Syno</b><span style="font-family:'Liberation Serif',serif">logy</span></div>
<div class="a" id="t_dsm" style="left:969.5px;top:914.6px;font-size:19px;line-height:22px;color:#b9c1c9;white-space:nowrap;text-shadow:1px 1px 0 rgba(50,60,70,.35),0 -1px 0 rgba(255,255,255,.5);letter-spacing:0.055px">DSM 4.1</div>
<!-- watermark -->
<svg class="a" style="left:1630px;top:890px" width="76" height="68" viewBox="0 0 76 68">
 <defs><linearGradient id="xg" x1="1" y1="0" x2="0" y2="1"><stop offset="0" stop-color="#f0f4fc" stop-opacity=".95"/><stop offset=".5" stop-color="#b0c4ec" stop-opacity=".85"/><stop offset="1" stop-color="#7c92d8" stop-opacity=".85"/></linearGradient></defs>
 <g transform="rotate(14 38 34)">
  <rect x="14" y="10" width="48" height="48" rx="6" fill="url(#xg)" stroke="#c8d0e0" stroke-opacity=".7" stroke-width="1"/>
  <path d="M27 22 L49 46 M49 24 L27 44" stroke="#ffffff" stroke-opacity=".9" stroke-width="5" stroke-linecap="round"/>
 </g>
</svg>
<div class="a" id="t_xh" style="left:1703.0px;top:910.2px;font-size:25px;line-height:30px;color:rgba(95,118,172,.62);white-space:nowrap;transform:scaleX(.82);transform-origin:0 0;letter-spacing:-0.955px">xtremehardware.com</div>
<div class="a" style="left:0;top:958px;width:1920px;height:1px;background:#7a8898"></div>
</body></html>
